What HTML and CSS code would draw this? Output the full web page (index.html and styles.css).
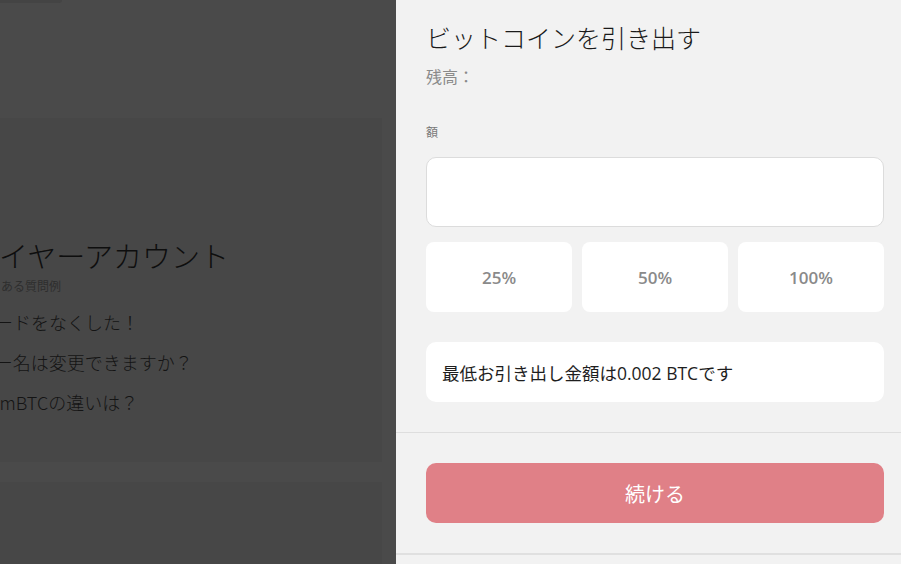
FILE: index.html
```html
<!DOCTYPE html>
<html lang="ja">
<head>
<meta charset="utf-8">
<title>ビットコインを引き出す</title>
<link rel="stylesheet" href="styles.css">
</head>
<body>
<div class="page">
  <div class="backdrop">
    <div class="tab"></div>
    <section class="faq-card">
      <h2 class="faq-title">プレイヤーアカウント</h2>
      <p class="faq-sub">関するよくある質問例</p>
      <ul class="faq-list">
        <li>パスワードをなくした！</li>
        <li>ユーザー名は変更できますか？</li>
        <li>BTC と mBTCの違いは？</li>
      </ul>
    </section>
    <section class="faq-card second"></section>
  </div>
  <aside class="panel">
    <div class="panel-body">
      <h1 class="title">ビットコインを引き出す</h1>
      <p class="balance">残高：</p>
      <label class="label">額</label>
      <div class="amount-input"></div>
      <div class="percents">
        <button class="pct">25%</button>
        <button class="pct">50%</button>
        <button class="pct">100%</button>
      </div>
      <div class="notice">最低お引き出し金額は0.002 BTCです</div>
    </div>
    <div class="divider"></div>
    <div class="panel-foot">
      <button class="continue">続ける</button>
    </div>
    <div class="divider thick"></div>
  </aside>
</div>
</body>
</html>
```
FILE: styles.css
```css
* { box-sizing: border-box; }
html, body { margin: 0; padding: 0; }
body {
  width: 901px;
  height: 564px;
  overflow: hidden;
  font-family: "Lato", "Noto Sans CJK JP", sans-serif;
  background: #4a4a4a;
}
.page {
  display: flex;
  height: 564px;
}
.backdrop {
  flex: 1;
  background: #4a4a4a;
  overflow: hidden;
  display: flex;
  flex-direction: column;
}
.tab {
  width: 62px;
  height: 3px;
  background: #444444;
  border-bottom-right-radius: 4px;
  flex-shrink: 0;
}
.faq-card {
  margin-top: 115px;
  margin-left: -100px;
  width: 482px;
  height: 344px;
  background: #474747;
  padding: 119px 0 0 41px;
  flex-shrink: 0;
}
.faq-card.second {
  margin-top: 20px;
  height: 100px;
  padding: 0;
}
.faq-title {
  margin: 0;
  font-family: "Noto Sans CJK JP", sans-serif;
  font-weight: 300;
  font-size: 29px;
  line-height: 36px;
  color: #0e0e0e;
  white-space: nowrap;
}
.faq-sub {
  margin: 5px 0 0;
  font-family: "Noto Sans CJK JP", sans-serif;
  font-size: 12px;
  line-height: 16px;
  color: #2e2e2e;
  white-space: nowrap;
}
.faq-list {
  list-style: none;
  margin: 8px 0 0;
  padding: 0;
  font-family: "Noto Sans CJK JP", sans-serif;
  font-weight: 300;
  font-size: 18px;
  line-height: 40px;
  color: #141414;
  white-space: nowrap;
}
.panel {
  width: 505px;
  flex-shrink: 0;
  background: #f2f2f2;
  display: flex;
  flex-direction: column;
}
.panel-body {
  padding: 21px 17px 30px 30px;
  display: flex;
  flex-direction: column;
}
.title {
  margin: 0;
  font-family: "Noto Sans CJK JP", sans-serif;
  font-weight: 300;
  font-size: 25px;
  line-height: 32px;
  color: #1a1a1a;
}
.balance {
  margin: 12px 0 0;
  font-family: "Noto Sans CJK JP", sans-serif;
  font-size: 16px;
  line-height: 22px;
  color: #8a8a8a;
}
.label {
  margin-top: 37px;
  font-family: "Noto Sans CJK JP", sans-serif;
  font-size: 12px;
  line-height: 16px;
  color: #7a7a7a;
}
.amount-input {
  margin-top: 17px;
  height: 70px;
  background: #ffffff;
  border: 1px solid #dcdcdc;
  border-radius: 10px;
}
.percents {
  margin-top: 15px;
  display: grid;
  grid-template-columns: repeat(3, 1fr);
  gap: 10px;
}
.pct {
  height: 70px;
  border: none;
  border-radius: 8px;
  background: #ffffff;
  font-family: "Open Sans", sans-serif;
  font-weight: 600;
  font-size: 17px;
  color: #8a8a8a;
  padding: 0;
}
.notice {
  margin-top: 30px;
  height: 60px;
  background: #ffffff;
  border-radius: 10px;
  padding: 0 16px;
  display: flex;
  align-items: center;
  font-family: "Open Sans", "Noto Sans CJK JP", sans-serif;
  font-size: 17.5px;
  color: #1e1e1e;
}
.divider {
  height: 1px;
  background: #dedede;
  flex-shrink: 0;
}
.divider.thick {
  height: 2px;
  background: #e0e0e0;
}
.panel-foot {
  padding: 30px 17px 30px 30px;
}
.continue {
  width: 100%;
  height: 60px;
  border: none;
  border-radius: 10px;
  background: #e08087;
  color: #ffffff;
  font-family: "Noto Sans CJK JP", sans-serif;
  font-size: 20px;
  padding: 0;
}
```
